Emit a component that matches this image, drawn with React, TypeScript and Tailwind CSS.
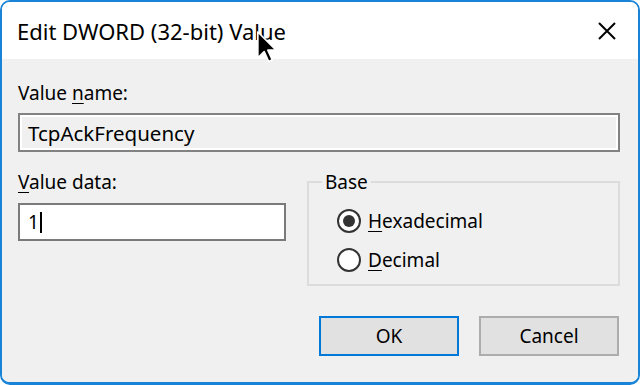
import type { ReactNode } from "react";

const font = { fontFamily: '"Noto Sans", "Segoe UI", sans-serif' };

function Radio({ checked, children }: { checked?: boolean; children: ReactNode }) {
  return (
    <div className="flex h-[39px] items-center gap-[7px]">
      <span className="flex h-[24px] w-[24px] items-center justify-center rounded-full border-2 border-[#333333] bg-white">
        {checked && <span className="h-[12px] w-[12px] rounded-full bg-[#333333]" />}
      </span>
      <span className="text-[19px] leading-[24px] text-black">{children}</span>
    </div>
  );
}

function Cursor() {
  return (
    <svg
      className="absolute left-[257px] top-[31px]"
      width="20"
      height="32"
      viewBox="0 0 12 19"
    >
      <path
        d="M0.5 0.5 L0.5 16 L4.3 12.3 L7 18.2 L9.2 17.2 L6.5 11.4 L11.5 11.4 Z"
        fill="#000"
        stroke="#fff"
        strokeWidth="1"
        strokeLinejoin="round"
      />
    </svg>
  );
}

export default function App() {
  return (
    <div className="relative h-[385px] w-[640px] bg-white" style={font}>
      <div className="flex h-full w-full flex-col overflow-hidden rounded-[10px] border-2 border-b-[3px] border-[#1883d7]">
        {/* title bar */}
        <div className="flex h-[57px] shrink-0 items-center justify-between bg-white pl-[15px] pr-[22px]">
          <span className="text-[22px] leading-[28px] text-black">Edit DWORD (32-bit) Value</span>
          <svg width="18" height="18" viewBox="0 0 18 18">
            <path d="M1 1 L17 17 M17 1 L1 17" stroke="#000" strokeWidth="2" />
          </svg>
        </div>

        {/* body */}
        <div className="flex flex-1 flex-col bg-[#f0f0f0] pl-[16px] pr-[18px] pt-[22px]">
          <div className="text-[19px] leading-[24px] text-black">
            Value <span className="underline underline-offset-[3px]">n</span>ame:
          </div>
          <div className="mt-[8px] flex h-[39px] items-center border-2 border-[#828282] bg-[#f0f0f0] pl-[8px] shadow-[inset_0_0_0_2px_#ffffff]">
            <span className="text-[20.5px] leading-[24px] text-black">TcpAckFrequency</span>
          </div>

          <div className="mt-[18px] flex gap-[21px]">
            <div className="flex w-[268px] flex-col">
              <div className="text-[19px] leading-[24px] text-black">
                <span className="underline underline-offset-[3px]">V</span>alue data:
              </div>
              <div className="mt-[9px] flex h-[38px] items-center border-2 border-[#7a7a7a] bg-white pl-[8px]">
                <span className="text-[19px] leading-[24px] text-black">1</span>
                <span className="ml-[1px] h-[21px] w-[2px] bg-black" />
              </div>
            </div>
            <fieldset className="h-[116px] flex-1 rounded-none border-2 border-[#dcdcdc] pl-[13px] pt-[7px]">
              <legend className="px-[3px] text-[19px] leading-[24px] text-black">Base</legend>
              <div className="pl-[15px]">
                <Radio checked>
                  <span className="underline underline-offset-[3px]">H</span>exadecimal
                </Radio>
                <Radio>
                  <span className="underline underline-offset-[3px]">D</span>ecimal
                </Radio>
              </div>
            </fieldset>
          </div>

          <div className="mt-[30px] flex justify-end gap-[20px] pr-[1px]">
            <button className="h-[40px] w-[140px] border-2 border-[#0078d7] bg-[#e1e1e1] text-[19px] text-black">
              OK
            </button>
            <button className="h-[40px] w-[140px] border-2 border-[#adadad] bg-[#e1e1e1] text-[19px] text-black">
              Cancel
            </button>
          </div>
        </div>
      </div>
      <Cursor />
    </div>
  );
}
